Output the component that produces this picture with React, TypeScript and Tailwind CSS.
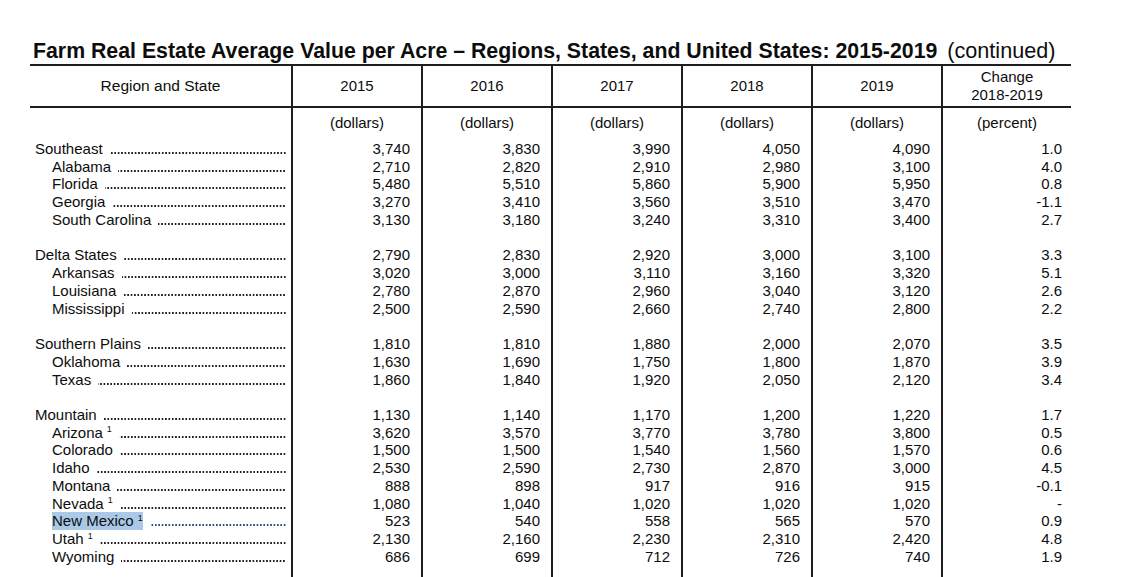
import React from 'react';

type Row = {
  label: string;
  state?: boolean;
  note?: boolean;
  highlight?: boolean;
  values: string[];
} | null;

const rows: Row[] = [
  { label: 'Southeast', values: ['3,740', '3,830', '3,990', '4,050', '4,090', '1.0'] },
  { label: 'Alabama', state: true, values: ['2,710', '2,820', '2,910', '2,980', '3,100', '4.0'] },
  { label: 'Florida', state: true, values: ['5,480', '5,510', '5,860', '5,900', '5,950', '0.8'] },
  { label: 'Georgia', state: true, values: ['3,270', '3,410', '3,560', '3,510', '3,470', '-1.1'] },
  { label: 'South Carolina', state: true, values: ['3,130', '3,180', '3,240', '3,310', '3,400', '2.7'] },
  null,
  { label: 'Delta States', values: ['2,790', '2,830', '2,920', '3,000', '3,100', '3.3'] },
  { label: 'Arkansas', state: true, values: ['3,020', '3,000', '3,110', '3,160', '3,320', '5.1'] },
  { label: 'Louisiana', state: true, values: ['2,780', '2,870', '2,960', '3,040', '3,120', '2.6'] },
  { label: 'Mississippi', state: true, values: ['2,500', '2,590', '2,660', '2,740', '2,800', '2.2'] },
  null,
  { label: 'Southern Plains', values: ['1,810', '1,810', '1,880', '2,000', '2,070', '3.5'] },
  { label: 'Oklahoma', state: true, values: ['1,630', '1,690', '1,750', '1,800', '1,870', '3.9'] },
  { label: 'Texas', state: true, values: ['1,860', '1,840', '1,920', '2,050', '2,120', '3.4'] },
  null,
  { label: 'Mountain', values: ['1,130', '1,140', '1,170', '1,200', '1,220', '1.7'] },
  { label: 'Arizona', state: true, note: true, values: ['3,620', '3,570', '3,770', '3,780', '3,800', '0.5'] },
  { label: 'Colorado', state: true, values: ['1,500', '1,500', '1,540', '1,560', '1,570', '0.6'] },
  { label: 'Idaho', state: true, values: ['2,530', '2,590', '2,730', '2,870', '3,000', '4.5'] },
  { label: 'Montana', state: true, values: ['888', '898', '917', '916', '915', '-0.1'] },
  { label: 'Nevada', state: true, note: true, values: ['1,080', '1,040', '1,020', '1,020', '1,020', '-'] },
  { label: 'New Mexico', state: true, note: true, highlight: true, values: ['523', '540', '558', '565', '570', '0.9'] },
  { label: 'Utah', state: true, note: true, values: ['2,130', '2,160', '2,230', '2,310', '2,420', '4.8'] },
  { label: 'Wyoming', state: true, values: ['686', '699', '712', '726', '740', '1.9'] },
];

const years = ['2015', '2016', '2017', '2018', '2019'];

const grid = 'grid grid-cols-[261px_repeat(6,130px)]';
const cell = 'border-l-2 border-[#1e1e1e]';

// dotted leader between the label and the first number column
const Label = ({ row }: { row: NonNullable<Row> }) => (
  <div className={`flex items-start h-full pr-[5px] ${row.state ? 'pl-[22px]' : 'pl-[5px]'}`}>
    <span className={`whitespace-nowrap ${row.highlight ? 'bg-[#a9c9e7]' : ''}`}>
      {row.label}
      {row.note && <sup className="text-[9px] ml-[4px] -top-[0.6em]">1</sup>}
    </span>
    <span
      className={`flex-1 ml-[7px] mt-[12px] h-[2px] bg-repeat-x bg-right bg-[length:3.4px_2px] ${
        row.highlight
          ? 'bg-[radial-gradient(circle,#2d4f80_0.8px,transparent_1.1px)]'
          : 'bg-[radial-gradient(circle,#222_0.8px,transparent_1.1px)]'
      }`}
    />
  </div>
);

export default function App() {
  return (
    <div className="w-[1123px] h-[577px] overflow-hidden bg-white text-[#0d0d0d] font-['Liberation_Sans',Arial,sans-serif]">
      <div className="pl-[30px] pt-[39px]">
        <div className="pl-[3px] text-[21.3px] leading-[24px] whitespace-nowrap">
          <span className="font-bold">Farm Real Estate Average Value per Acre – Regions, States, and United States: 2015-2019</span>
          <span className="ml-[10px] text-[21.6px]">(continued)</span>
        </div>

        <div className="w-[1041px] mt-[1px] text-[15px]">
          {/* header */}
          <div className={`${grid} h-[44px] border-y-2 border-[#1e1e1e] leading-[18px]`}>
            <div className="flex items-center justify-center text-[15.5px]">Region and State</div>
            {years.map((y) => (
              <div key={y} className={`${cell} flex items-center justify-center`}>{y}</div>
            ))}
            <div className={`${cell} flex flex-col items-center justify-center`}>
              <span>Change</span>
              <span>2018-2019</span>
            </div>
          </div>

          {/* units */}
          <div className={`${grid} h-[32px] leading-[17.74px]`}>
            <div />
            {years.map((y) => (
              <div key={y} className={`${cell} pt-[6px] text-center`}>(dollars)</div>
            ))}
            <div className={`${cell} pt-[6px] text-center`}>(percent)</div>
          </div>

          {/* data */}
          {rows.map((row, i) => (
            <div key={i} className={`${grid} h-[17.74px] leading-[17.74px]`}>
              <div>{row && <Label row={row} />}</div>
              {[0, 1, 2, 3, 4, 5].map((c) => (
                <div key={c} className={`${cell} text-right ${c === 5 ? 'pr-[9px]' : 'pr-[11px]'}`}>
                  {row ? row.values[c] : ''}
                </div>
              ))}
            </div>
          ))}

          <div className={`${grid} h-[30px]`}>
            <div />
            {[0, 1, 2, 3, 4, 5].map((c) => (
              <div key={c} className={cell} />
            ))}
          </div>
        </div>
      </div>
    </div>
  );
}
